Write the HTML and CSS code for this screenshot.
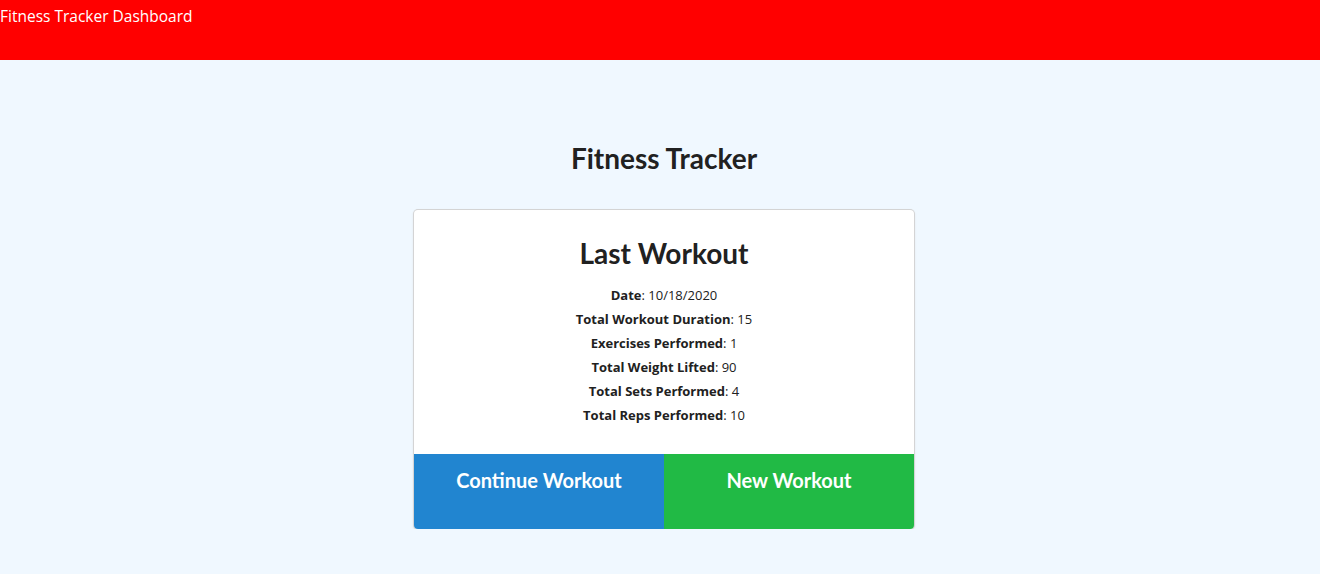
FILE: index.html
```html
<!DOCTYPE html>
<html>
<head>
<meta charset="utf-8">
<link rel="stylesheet" href="styles.css">
</head>
<body>
<header class="topbar">Fitness Tracker Dashboard</header>
<main class="main">
  <h1 class="title">Fitness Tracker</h1>
  <div class="card">
    <div class="card-body">
      <h2 class="card-title">Last Workout</h2>
      <ul class="stats">
        <li><strong>Date</strong>: 10/18/2020</li>
        <li><strong>Total Workout Duration</strong>: 15</li>
        <li><strong>Exercises Performed</strong>: 1</li>
        <li><strong>Total Weight Lifted</strong>: 90</li>
        <li><strong>Total Sets Performed</strong>: 4</li>
        <li><strong>Total Reps Performed</strong>: 10</li>
      </ul>
    </div>
    <div class="buttons">
      <button class="btn btn-blue">Continue Workout</button>
      <button class="btn btn-green">New Workout</button>
    </div>
  </div>
</main>
</body>
</html>
```
FILE: styles.css
```css
html, body { margin: 0; padding: 0; }
body {
  background: #f0f8ff;
  font-family: "Open Sans", "Noto Sans", sans-serif;
  color: #212121;
}
.topbar {
  background: #ff0000;
  color: #fff;
  height: 60px;
  font-size: 15.5px;
  line-height: 32px;
  padding: 0;
  box-sizing: border-box;
}
.main {
  display: flex;
  flex-direction: column;
  align-items: center;
  padding: 78px 0 0 8px;
}
.title {
  font-family: Lato, sans-serif;
  font-weight: 700;
  font-size: 28px;
  line-height: 40px;
  margin: 0 0 32px 0;
  color: #212121;
}
.card {
  width: 500px;
  background: #fff;
  border-radius: 4px;
  box-shadow: 0 1px 3px 0 #d4d4d5, 0 0 0 1px #d4d4d5;
  overflow: hidden;
}
.card-body {
  padding: 25px 16px 27px;
  text-align: center;
}
.card-title {
  font-family: Lato, sans-serif;
  font-weight: 700;
  font-size: 28px;
  line-height: 36px;
  margin: 0 0 12px 0;
}
.stats {
  list-style: none;
  margin: 0;
  padding: 0;
  font-size: 13px;
  line-height: 24px;
}
.stats strong { font-weight: 700; }
.buttons {
  display: flex;
}
.btn {
  flex: 1;
  height: 75px;
  border: 0;
  margin: 0;
  color: #fff;
  font-family: Lato, sans-serif;
  font-weight: 700;
  font-size: 20px;
  padding: 14px 0 0 0;
  display: flex;
  justify-content: center;
  align-items: flex-start;
}
.btn-blue { background: #2185d0; }
.btn-green { background: #21ba45; }
```
